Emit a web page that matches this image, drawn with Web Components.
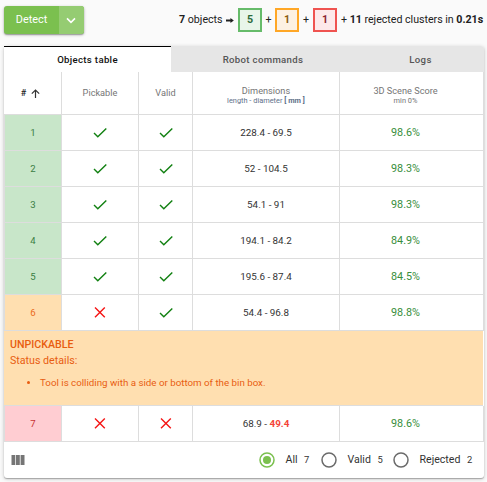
<!DOCTYPE html>
<html lang="en">
<head>
<meta charset="utf-8">
<title>Detection results</title>
<style>
html,body{margin:0;height:100%;background:#fafafa;overflow:hidden}
body{font-family:Roboto,"Liberation Sans",sans-serif;font-size:11.2px;color:#212121}
</style>
</head>
<body>
<detect-page></detect-page>
<script>
const define = (name, html, setup) => customElements.define(name, class extends HTMLElement {
  constructor() {
    super();
    this.attachShadow({mode: 'open'}).innerHTML =
      '<style>*{box-sizing:border-box}</style>' + html;
  }
  connectedCallback() { if (setup) setup(this, this.shadowRoot); }
});

define('split-button', `<style>
:host{display:flex;width:80px;height:28px;border-radius:3px;background:#7bc04f;color:#fff;box-shadow:0 1px 3px rgba(0,0,0,.3),0 1px 1px rgba(0,0,0,.2);overflow:visible}
.main{width:55px;display:flex;align-items:center;justify-content:center;font-size:10.9px;line-height:28px;padding-bottom:1px}
.more{flex:1;display:flex;align-items:center;justify-content:center;background:#95cc72;border-radius:0 3px 3px 0}
.more{padding-right:1px}
</style><div class="main"><slot></slot></div>
<div class="more"><svg width="10" height="7" viewBox="0 0 10 7"><path d="M1 1.4 5 5.3 9 1.4" fill="none" stroke="#fff" stroke-width="1.6"/></svg></div>`);

define('count-box', `<style>
:host{display:block;flex:none;width:24px;height:24px;border:2px solid var(--line);background:var(--fill);color:var(--ink);font-weight:700;text-align:center;line-height:19px}
</style><slot></slot>`);

define('detect-summary', `<style>
:host{display:flex;align-items:center;height:24px;font-size:10.67px;white-space:pre}
.plus{width:13px;text-align:center}
.lead,.plus,.tail{padding-bottom:1px}
.lead{width:43.5px}
.tail{width:143px;margin-left:4px;letter-spacing:-.02px}
svg{margin:0 4px 0 3.5px}
</style>
<span class="lead"><b>7</b> objects</span>
<svg width="8" height="7" viewBox="0 0 9 7"><path d="M0 2.5h5V.8L8.8 3.6 5 6.4V4.7H0z" fill="#212121"/></svg>
<count-box style="--line:#66bb6a;--fill:#e8f5e9;--ink:#2d6b3c">5</count-box><span class="plus">+</span>
<count-box style="--line:#ffa726;--fill:#fdf1e3;--ink:#8a5a10">1</count-box><span class="plus" style="width:14px">+</span>
<count-box style="--line:#ef5350;--fill:#fde9ea;--ink:#8c2430">1</count-box>
<span class="tail">+ <b>11</b> rejected clusters in <b>0.21s</b></span>`);

define('tab-bar', `<style>
:host{display:grid;grid-template-columns:167px 156px 1fr;height:26px;font-size:9.6px;font-weight:500;letter-spacing:.33px;color:#555}
div{display:flex;align-items:center;justify-content:center;background:#e6e6e6}
.on{background:#fff;border-top:1px solid #000;color:#111}
.on{padding-bottom:1px}
.last{border-top-right-radius:3px;padding-left:30px}
</style><div class="on">Objects table</div><div style="padding-left:28px">Robot commands</div><div class="last">Logs</div>`);

define('status-mark', `<style>:host{display:block;height:16px}svg{display:block}</style><svg width="16" height="16" viewBox="0 0 16 16" fill="none" stroke-width="1.4"></svg>`,
(el, root) => {
  const ok = el.hasAttribute('ok');
  const svg = root.querySelector('svg');
  svg.setAttribute('stroke', ok ? '#118011' : '#f51414');
  svg.innerHTML = ok ? '<path d="M2 8.1 5.8 11.8 14.3 3.4"/>' : '<path d="M3 2.5 12.8 12.3M12.8 2.5 3 12.3"/>';
});

const columns = 'grid-template-columns:58px 77px 54px 147px 1fr';

define('table-head', `<style>
:host{display:grid;${columns};height:43px;border-bottom:1px solid #ddd;font-size:9.2px;font-weight:400;color:#757575}
div{display:flex;flex-direction:column;align-items:center;justify-content:center;border-right:1px solid #ddd;line-height:12px}
.num{flex-direction:row;font-weight:500;color:#212121;gap:5px;padding-right:4px}
small{font-size:7.4px;line-height:9px;color:#607089}
.two{padding-top:3px}
.two span{line-height:11px}
div:last-child{padding-right:12px}
</style>
<div class="num">#<svg width="9" height="9" viewBox="0 0 9 9"><path d="M4.5 9V1M.8 4.7 4.5 1 8.2 4.7" fill="none" stroke="#333" stroke-width="1.2"/></svg></div>
<div>Pickable</div><div>Valid</div>
<div class="two"><span>Dimensions</span><small>length - diameter <b>[ mm ]</b></small></div>
<div class="two"><span>3D Scene Score</span><small style="color:#757575">min 0%</small></div>`);

define('object-row', `<style>
:host{display:grid;${columns};height:36px;border-bottom:1px solid #ddd;font-size:10.4px;color:#333}
div{display:flex;align-items:center;justify-content:center;border-right:1px solid #ddd;white-space:pre}
.n{background:var(--bg);color:var(--ink);border-left:1px solid #ddd;font-size:9.6px}
.score{color:#388e3c;font-size:10.8px;padding:0 12px 1px 0}
.dim{font-size:9.85px}
</style><div class="n"></div><div class="p"></div><div class="v"></div><div class="dim"><slot></slot></div><div class="score"></div>`,
(el, root) => {
  const palette = {ok: ['#c8e6c9', '#3b7d43'], warn: ['#ffdfb0', '#ea6a1a'], bad: ['#ffcdd2', '#c83232']}[el.getAttribute('kind')];
  el.style.setProperty('--bg', palette[0]);
  el.style.setProperty('--ink', palette[1]);
  root.querySelector('.n').textContent = el.getAttribute('num');
  root.querySelector('.score').textContent = el.getAttribute('score');
  root.querySelector('.p').innerHTML = `<status-mark ${el.getAttribute('kind') === 'ok' ? 'ok' : ''}></status-mark>`;
  root.querySelector('.v').innerHTML = `<status-mark ${el.getAttribute('kind') !== 'bad' ? 'ok' : ''}></status-mark>`;
});

define('status-note', `<style>
:host{display:block;height:75px;background:#ffdfb0;border-bottom:1px solid #ddd;color:#e85d10;padding:6px 6px 0;font-size:10.67px;line-height:16px;margin-right:1px}
:host{box-sizing:border-box}
b{display:block;font-weight:500}
ul{margin:6px 0 0;padding-left:30px;font-size:9.76px;line-height:15px}
</style><b>UNPICKABLE</b><div>Status details:</div><ul><li><slot></slot></li></ul>`);

define('radio-option', `<style>
:host{display:flex;align-items:center;color:#333;font-size:10.6px}
svg{display:block;margin-right:10.5px}
small{font-size:9.4px;margin-left:6.5px}
span,small{padding-bottom:1px}
</style><svg width="16" height="16" viewBox="0 0 16 16"><circle cx="8" cy="8" r="7" fill="none" stroke-width="1.5"/></svg><span><slot></slot></span><small></small>`,
(el, root) => {
  const on = el.hasAttribute('checked'), svg = root.querySelector('svg');
  svg.setAttribute('stroke', on ? '#7bc04f' : '#6b6b6b');
  if (on) svg.insertAdjacentHTML('beforeend', '<circle cx="8" cy="8" r="4" fill="#7bc04f" stroke="none"/>');
  root.querySelector('small').textContent = el.getAttribute('count');
});

define('table-footer', `<style>
:host{display:grid;grid-template-columns:1fr 62px 72px 80px;align-items:center;height:36px;padding:0 11px 0 7px}
:host{box-sizing:border-box}
.cols{padding-bottom:1px}
.cols svg{display:block}
</style><div class="cols"><svg width="14" height="10" viewBox="0 0 14 10" fill="#757575"><path d="M.5 0h3.8v10H.5zM5 0h3.8v10H5zM9.6 0h3.9v10H9.6z"/></svg></div>
<radio-option checked count="7">All</radio-option><radio-option count="5">Valid</radio-option><radio-option count="2">Rejected</radio-option>`);

define('objects-card', `<style>
:host{display:block;width:480px;height:432px;background:#fff;border-radius:3px;box-shadow:0 1px 4px rgba(0,0,0,.2),0 1px 1px rgba(0,0,0,.25)}
</style>
<tab-bar></tab-bar><table-head></table-head>
<object-row kind="ok" num="1" score="98.6%">228.4 - 69.5</object-row>
<object-row kind="ok" num="2" score="98.3%">52 - 104.5</object-row>
<object-row kind="ok" num="3" score="98.3%">54.1 - 91</object-row>
<object-row kind="ok" num="4" score="84.9%">194.1 - 84.2</object-row>
<object-row kind="ok" num="5" score="84.5%">195.6 - 87.4</object-row>
<object-row kind="warn" num="6" score="98.8%">54.4 - 96.8</object-row>
<status-note>Tool is colliding with a side or bottom of the bin box.</status-note>
<object-row kind="bad" num="7" score="98.6%">68.9 - <b style="color:#f44336">49.4</b></object-row>
<table-footer></table-footer>`);

define('detect-page', `<style>
:host{display:block;padding:6px 3px 0 4px}
header{display:flex;justify-content:space-between;height:40px;align-items:flex-start}
detect-summary{margin-top:2px}
</style><header><split-button>Detect</split-button><detect-summary></detect-summary></header><objects-card></objects-card>`);
</script>
</body>
</html>
